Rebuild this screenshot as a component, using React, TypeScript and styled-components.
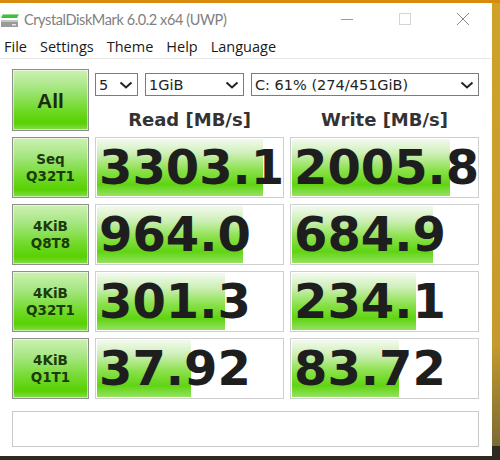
import React from 'react';
import styled, { createGlobalStyle } from 'styled-components';

const GlobalStyle = createGlobalStyle`
  html, body {
    margin: 0;
    padding: 0;
  }
  body {
    width: 500px;
    height: 460px;
    overflow: hidden;
    background: linear-gradient(to bottom, #d88a0e 0, #d88a0e 3px, #cfa328 3px, #c49a2c 75%, #7a6a34 97%, #2e2a22 97%);
    font-family: "Noto Sans", sans-serif;
  }
`;

const Window = styled.div`
  margin-top: 3px;
  width: 492px;
  height: 453px;
  background: #ffffff;
  display: flex;
  flex-direction: column;
`;

const TitleBar = styled.div`
  height: 32px;
  display: flex;
  align-items: center;
`;

const AppIcon = styled.svg`
  width: 20px;
  height: 20px;
  flex: none;
`;

const Title = styled.span`
  margin-left: 4px;
  font-size: 14.5px;
  letter-spacing: -0.4px;
  color: #808080;
  font-family: Lato, "Noto Sans", sans-serif;
  flex: 1;
`;

const Caption = styled.div`
  display: flex;
  height: 100%;
`;

const CaptionButton = styled.div`
  width: 58px;
  display: flex;
  align-items: center;
  justify-content: center;
`;

const MenuBar = styled.div`
  height: 23px;
  border-bottom: 1px solid #e8e8e8;
  display: flex;
  align-items: center;
  padding-left: 4px;
  gap: 13px;
`;

const MenuItem = styled.span`
  font-size: 14.5px;
  color: #1a1a1a;
  font-family: "Open Sans", "Noto Sans", sans-serif;
`;

const Main = styled.div`
  padding: 10px 0 0 12px;
  display: grid;
  grid-template-columns: 77px 189px 189px;
  column-gap: 6px;
  row-gap: 6px;
`;

const GreenButton = styled.div<{ $tall?: boolean }>`
  grid-row: ${p => (p.$tall ? 'span 2' : 'auto')};
  height: ${p => (p.$tall ? '62px' : '61px')};
  box-sizing: border-box;
  border: 1px solid #8e8e8e;
  box-shadow: inset 0 0 0 1px rgba(255, 255, 255, 0.55);
  background: linear-gradient(to bottom, #cdf1b2 0%, #a6e682 30%, #72da2c 65%, #58d102 88%, #86dc4e 100%);
  display: flex;
  flex-direction: column;
  align-items: center;
  justify-content: center;
  color: #1c3a0c;
  font-family: "DejaVu Sans", sans-serif;
  font-weight: bold;
  font-size: 13.5px;
  line-height: 17px;
`;

const AllLabel = styled.span`
  font-family: "Liberation Sans", sans-serif;
  font-size: 21px;
  color: #1c2a12;
`;

const Selects = styled.div`
  grid-column: 2 / 4;
  padding-top: 4px;
  display: flex;
  gap: 7px;
`;

const SelectBox = styled.div<{ $w: number }>`
  width: ${p => p.$w}px;
  height: 23px;
  box-sizing: border-box;
  border: 1px solid #7c7c7c;
  display: flex;
  align-items: center;
  justify-content: space-between;
  padding: 0 4px 0 3px;
  font-family: "DejaVu Sans", sans-serif;
  font-size: 14.5px;
  color: #222;
`;

const Chevron = styled.svg`
  width: 14px;
  height: 8px;
  flex: none;
`;

const Header = styled.div`
  align-self: end;
  text-align: center;
  font-family: "DejaVu Sans", sans-serif;
  font-weight: bold;
  font-size: 18px;
  line-height: 22px;
  color: #333;
`;

const ValueBox = styled.div`
  position: relative;
  height: 61px;
  box-sizing: border-box;
  border: 1px solid #cfcfcf;
  background: #fff;
  padding: 1px;
  overflow: hidden;
`;

const Bar = styled.div`
  height: 100%;
  background: linear-gradient(to bottom, #f3faef 0%, #cdefb6 26%, #8ae14a 55%, #60d412 80%, #94e260 100%);
`;

const Value = styled.span`
  position: absolute;
  left: 3px;
  top: 5px;
  font-family: "DejaVu Sans", sans-serif;
  font-weight: bold;
  font-size: 48px;
  line-height: 48px;
  color: #1e1e1e;
  white-space: nowrap;
`;

const Comment = styled.div`
  grid-column: 1 / 4;
  margin-top: 6px;
  height: 36px;
  box-sizing: border-box;
  border: 1px solid #c8c8c8;
`;

type Row = { label: [string, string]; read: string; write: string };

const rows: Row[] = [
  { label: ['Seq', 'Q32T1'], read: '3303.1', write: '2005.8' },
  { label: ['4KiB', 'Q8T8'], read: '964.0', write: '684.9' },
  { label: ['4KiB', 'Q32T1'], read: '301.3', write: '234.1' },
  { label: ['4KiB', 'Q1T1'], read: '37.92', write: '83.72' },
];

// log scale, same as the meter in the app
const barWidth = (v: string) => {
  const f = 0.2 * Math.log10(parseFloat(v)) + 0.195;
  return `${Math.max(0, Math.min(1, f)) * 100}%`;
};

const ChevronIcon = () => (
  <Chevron viewBox="0 0 14 8">
    <path d="M1.5 1.5 L7 6.5 L12.5 1.5" fill="none" stroke="#222" strokeWidth="2" />
  </Chevron>
);

const Meter: React.FC<{ value: string }> = ({ value }) => (
  <ValueBox>
    <Bar style={{ width: barWidth(value) }} />
    <Value>{value}</Value>
  </ValueBox>
);

const App = () => (
  <>
    <GlobalStyle />
    <Window>
      <TitleBar>
        <AppIcon viewBox="0 0 20 20">
          <polygon points="3,5 19,5 17,9 1,9" fill="#39c23a" />
          <polygon points="3,5 19,5 18.5,6 2.5,6" fill="#8fe08a" />
          <rect x="1" y="11" width="17" height="7" fill="#9a9a9a" />
          <rect x="1" y="11" width="17" height="2" fill="#c4c4c4" />
          <rect x="12" y="15" width="4" height="1.5" fill="#e6e6e6" />
        </AppIcon>
        <Title>CrystalDiskMark 6.0.2 x64 (UWP)</Title>
        <Caption>
          <CaptionButton>
            <svg width="14" height="14" viewBox="0 0 14 14">
              <path d="M1 7.5 H13" stroke="#9a9a9a" strokeWidth="1" />
            </svg>
          </CaptionButton>
          <CaptionButton>
            <svg width="14" height="14" viewBox="0 0 14 14">
              <rect x="1.5" y="1.5" width="11" height="11" fill="none" stroke="#d4d4d4" strokeWidth="1" />
            </svg>
          </CaptionButton>
          <CaptionButton>
            <svg width="14" height="14" viewBox="0 0 14 14">
              <path d="M1 1 L13 13 M13 1 L1 13" stroke="#8a8a8a" strokeWidth="1" />
            </svg>
          </CaptionButton>
        </Caption>
      </TitleBar>
      <MenuBar>
        <MenuItem>File</MenuItem>
        <MenuItem>Settings</MenuItem>
        <MenuItem>Theme</MenuItem>
        <MenuItem>Help</MenuItem>
        <MenuItem>Language</MenuItem>
      </MenuBar>
      <Main>
        <GreenButton $tall>
          <AllLabel>All</AllLabel>
        </GreenButton>
        <Selects>
          <SelectBox $w={43}>
            <span>5</span>
            <ChevronIcon />
          </SelectBox>
          <SelectBox $w={99}>
            <span>1GiB</span>
            <ChevronIcon />
          </SelectBox>
          <SelectBox $w={228}>
            <span>C: 61% (274/451GiB)</span>
            <ChevronIcon />
          </SelectBox>
        </Selects>
        <Header>Read [MB/s]</Header>
        <Header>Write [MB/s]</Header>
        {rows.map(r => (
          <React.Fragment key={r.label.join(' ')}>
            <GreenButton>
              <span>{r.label[0]}</span>
              <span>{r.label[1]}</span>
            </GreenButton>
            <Meter value={r.read} />
            <Meter value={r.write} />
          </React.Fragment>
        ))}
        <Comment />
      </Main>
    </Window>
  </>
);

export default App;
